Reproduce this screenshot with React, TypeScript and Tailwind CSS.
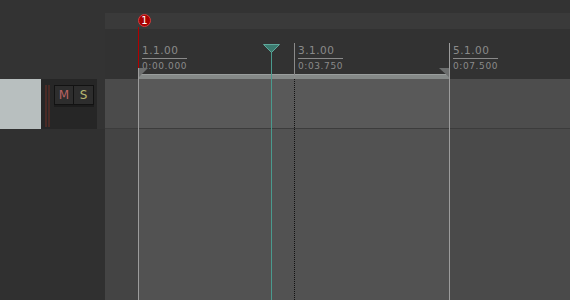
import React from 'react';

const font = { fontFamily: '"DejaVu Sans", "Liberation Sans", sans-serif' };

function RulerLabel({ bar, time, width }: { bar: string; time: string; width: string }) {
  return (
    <div className={`${width} flex`}>
      <div className="flex flex-col text-[#8a8a8a] leading-none" style={font}>
        <span className="text-[10.5px] tracking-[0.5px] pb-[2px] border-b border-[#8a8a8a] pr-[9px]">{bar}</span>
        <span className="text-[9px] tracking-[0.6px] pt-[3px]">{time}</span>
      </div>
    </div>
  );
}

export default function App() {
  return (
    <div className="w-[570px] h-[300px] flex bg-[#333333] overflow-hidden">
      {/* track control panel */}
      <div className="w-[105px] flex flex-col">
        <div className="h-[79px] bg-[#333333]" />
        <div className="h-[50px] flex">
          <div className="w-[41px] bg-[#b8bfbf]" />
          <div className="w-[56px] bg-[#262626] flex">
            <div className="flex gap-[1px] pl-[4px] pt-[6px] pb-[2px]">
              <div className="w-[2px] bg-[#4a2a25]" />
              <div className="w-[2px] bg-[#4a2a25]" />
            </div>
            <div className="flex flex-col pl-[4px] pt-[6px]">
              <div className="flex shadow-[0_2px_0_#1c1c1c]">
                <div className="w-[20px] h-[20px] bg-[#2d2d2d] border border-[#121212] flex items-center justify-center text-[12px] text-[#b86262]" style={font}>M</div>
                <div className="w-[20px] h-[20px] bg-[#2d2d2d] border border-l-0 border-[#121212] flex items-center justify-center text-[12px] text-[#b8b872]" style={font}>S</div>
              </div>
            </div>
          </div>
          <div className="flex-1 bg-[#333333]" />
        </div>
        <div className="flex-1 bg-[#303030]" />
      </div>

      {/* arrange view */}
      <div className="flex-1 flex flex-col relative">
        <div className="h-[13px] bg-[#333333]" />
        <div className="h-[16px] bg-[#3a3a3a]" />
        <div className="h-[50px] bg-[#323232] flex pt-[16px] pl-[37px]">
          <RulerLabel bar="1.1.00" time="0:00.000" width="w-[156px]" />
          <RulerLabel bar="3.1.00" time="0:03.750" width="w-[155px]" />
          <RulerLabel bar="5.1.00" time="0:07.500" width="w-[80px]" />
        </div>
        <div className="h-[50px] flex border-b border-[#3c3c3c]">
          <div className="w-[33px] bg-[#4b4b4b]" />
          <div className="w-[311px] bg-[#595959]" />
          <div className="flex-1 bg-[#4d4d4d]" />
        </div>
        <div className="flex-1 flex">
          <div className="w-[33px] bg-[#444444]" />
          <div className="w-[311px] bg-[#525252]" />
          <div className="flex-1 bg-[#4a4a4a]" />
        </div>

        {/* time selection bar */}
        <div className="absolute left-[33px] top-[74px] w-[311px] h-[5px] bg-[#858988] border-t border-[#9a9e9d]" />
        <svg className="absolute left-[33px] top-[68px]" width="11" height="11">
          <polygon points="0,0 10,0 0,10" fill="#6c6e6e" />
        </svg>
        <svg className="absolute left-[334px] top-[68px]" width="11" height="11">
          <polygon points="0,0 11,0 11,10" fill="#6c6e6e" />
        </svg>

        {/* marker 1 */}
        <div className="absolute left-[33px] top-[27px] w-[1px] h-[41px] bg-[#b00000]" />
        <div className="absolute left-[33px] top-[14px] w-[13px] h-[13px] rounded-full bg-[#a80000] border border-[#d04040] flex items-center justify-center text-white text-[10px] leading-none" style={font}>1</div>

        {/* grid / cursor lines */}
        <div className="absolute left-[33px] top-[68px] bottom-0 w-[1px] bg-[#9c9c9c]" />
        <div className="absolute left-[189px] top-[43px] h-[36px] w-[1px] bg-[#8a8a8a]" />
        <div className="absolute left-[189px] top-[79px] bottom-0 w-[1px] bg-[repeating-linear-gradient(to_bottom,#111_0px,#111_1px,transparent_1px,transparent_2px)]" />
        <div className="absolute left-[344px] top-[43px] bottom-0 w-[1px] bg-[#9c9c9c]" />

        {/* edit cursor */}
        <div className="absolute left-[166px] top-[52px] bottom-0 w-[1px] bg-[#4a9a8e]" />
        <svg className="absolute left-[158px] top-[44px]" width="17" height="9">
          <polygon points="0.5,0.5 16.5,0.5 8.5,8.5" fill="#3b7a6f" stroke="#5fa89b" strokeWidth="1" />
        </svg>
      </div>
    </div>
  );
}
